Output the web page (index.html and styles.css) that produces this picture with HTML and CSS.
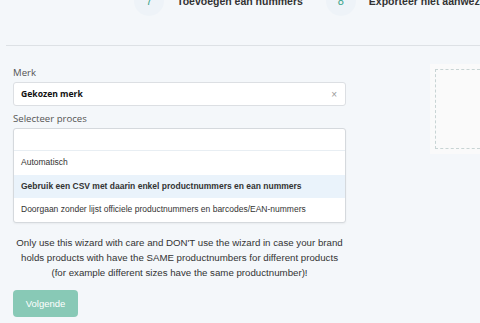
FILE: index.html
```html
<!DOCTYPE html>
<html>
<head>
<meta charset="utf-8">
<link rel="stylesheet" href="styles.css">
</head>
<body>
<div class="page">
  <div class="steps">
    <div class="step"><span class="num">7</span><span class="label">Toevoegen ean nummers</span></div>
    <div class="step"><span class="num">8</span><span class="label">Exporteer niet aanwezige producten</span></div>
  </div>
  <div class="divider"></div>
  <div class="content">
    <div class="form">
      <div class="field-label">Merk</div>
      <div class="input">
        <span class="value">Gekozen merk</span>
        <span class="clear">×</span>
      </div>
      <div class="field-label">Selecteer proces</div>
      <div class="select">
        <div class="search"></div>
        <div class="option">Automatisch</div>
        <div class="option active">Gebruik een CSV met daarin enkel productnummers en ean nummers</div>
        <div class="option">Doorgaan zonder lijst officiele productnummers en barcodes/EAN-nummers</div>
      </div>
      <p class="warning">Only use this wizard with care and DON'T use the wizard in case your brand<br>holds products with have the SAME productnumbers for different products<br>(for example different sizes have the same productnumber)!</p>
      <button class="next">Volgende</button>
    </div>
    <div class="side">
      <div class="drop"></div>
    </div>
  </div>
</div>
</body>
</html>
```

FILE: styles.css
```css
html, body {
  margin: 0;
  padding: 0;
  background: #f4f7fa;
  overflow: hidden;
}
.page {
  width: 480px;
  height: 323px;
  overflow: hidden;
  font-family: "Liberation Sans", Arial, sans-serif;
}
.steps {
  display: flex;
  margin-top: -14px;
  padding-left: 134px;
  gap: 23px;
  height: 30px;
  white-space: nowrap;
}
.step {
  display: flex;
  align-items: center;
  gap: 13px;
}
.num {
  width: 30px;
  height: 30px;
  border-radius: 50%;
  background: #eef3f8;
  color: #3aa38a;
  font-size: 11px;
  display: flex;
  align-items: center;
  justify-content: center;
}
.label {
  font-weight: bold;
  font-size: 10.5px;
  color: #333;
}
.divider {
  margin: 29px 0 0 6px;
  height: 1px;
  background: #dde1e5;
}
.content {
  display: flex;
  padding-left: 13px;
}
.form {
  width: 333px;
  padding-top: 20px;
}
.field-label {
  font-family: "Open Sans", sans-serif;
  font-size: 9.6px;
  color: #555;
  height: 16px;
  line-height: 14px;
}
.input {
  height: 22px;
  border: 1px solid #dcdfe3;
  border-radius: 3px;
  background: #fff;
  display: flex;
  align-items: center;
  justify-content: space-between;
  padding: 0 8px 0 7px;
  margin-bottom: 6px;
}
.value {
  font-family: "Open Sans", sans-serif;
  font-weight: bold;
  font-size: 8.6px;
  color: #111;
}
.clear {
  color: #999;
  font-size: 10px;
}
.select {
  border: 1px solid #d5d9dd;
  border-radius: 3px;
  background: #fff;
  box-shadow: 0 1px 2px rgba(0,0,0,0.05);
}
.search {
  height: 21px;
  border-bottom: 1px solid #e8eef3;
}
.option {
  height: 23.5px;
  line-height: 23.5px;
  padding-left: 7px;
  font-size: 8.5px;
  color: #333;
  white-space: nowrap;
}
.option.active {
  background: #eaf3fb;
  font-weight: bold;
}
.warning {
  margin: 12px 0 0;
  text-align: center;
  font-size: 9.7px;
  line-height: 15px;
  color: #333;
  white-space: nowrap;
}
.next {
  margin-top: 10px;
  width: 65px;
  height: 27px;
  border: none;
  border-radius: 4px;
  background: #88c9b6;
  color: #fff;
  font-family: "Liberation Sans", Arial, sans-serif;
  font-size: 9.5px;
  padding: 0;
}
.side {
  margin-left: 84px;
  padding-top: 18px;
  flex: 1;
}
.drop {
  background: #fafafa;
  padding: 5px 0 5px 5px;
  height: 80px;
}
.drop::before {
  content: "";
  display: block;
  height: 78px;
  border: 1px dashed #c8d4d4;
  border-right: none;
}
```
